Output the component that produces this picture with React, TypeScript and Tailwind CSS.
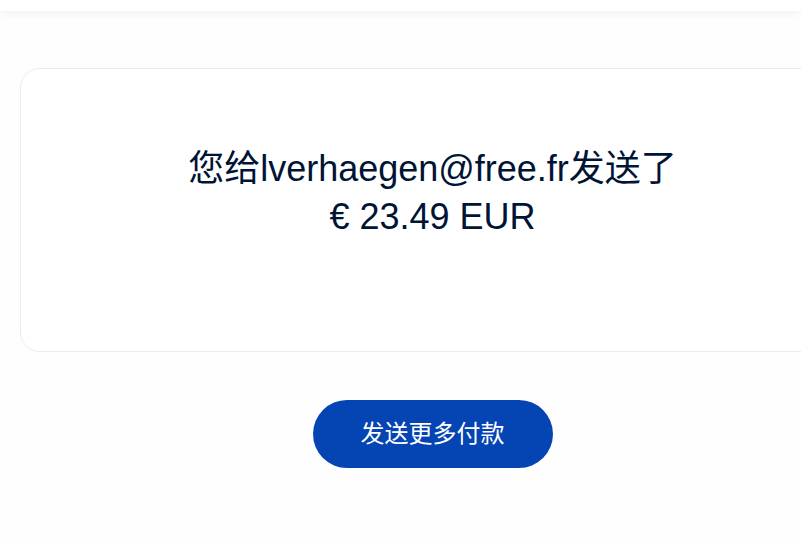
import React from 'react';

const FONT = '"Liberation Sans", "Noto Sans CJK SC", sans-serif';

export default function App() {
  return (
    <div className="h-[542px] w-full overflow-hidden bg-[#fefefe]" style={{ fontFamily: FONT }}>
      {/* top bar */}
      <div className="relative z-10 h-[11px] bg-white shadow-[0_2px_8px_rgba(0,0,0,0.06)]" />

      <div className="w-[865px] px-5 pt-[57px]">
        {/* confirmation card */}
        <div className="rounded-[20px] border border-[#ececec] bg-white pt-[76px] pb-[110px] text-center text-[36px] leading-[48px] text-[#001435]">
          <p>您给lverhaegen@free.fr发送了</p>
          <p>€ 23.49 EUR</p>
        </div>

        <div className="flex justify-center pt-12">
          <button
            type="button"
            className="h-[68px] w-[240px] rounded-full bg-[#0444b3] text-[24px] text-white"
          >
            发送更多付款
          </button>
        </div>
      </div>
    </div>
  );
}
